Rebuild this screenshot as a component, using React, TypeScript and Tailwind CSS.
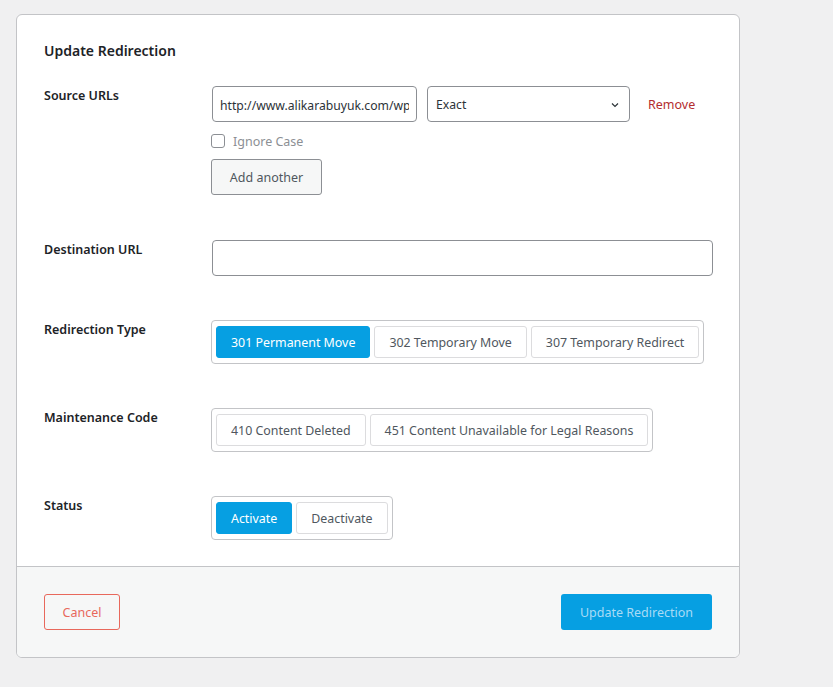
import React from "react";

const font = { fontFamily: '"Noto Sans", "Open Sans", sans-serif' };

function Seg({ items, active }: { items: string[]; active?: number }) {
  return (
    <div className="ml-[-1px] inline-flex shrink-0 gap-[4px] rounded-[4px] border border-[#c3c4c7] bg-white px-[4px] py-[5px]">
      {items.map((t, i) => (
        <button
          key={t}
          className={
            i === active
              ? "h-[32px] shrink-0 whitespace-nowrap rounded-[3px] border border-[#069fe2] bg-[#069fe2] px-[14px] pt-[2px] text-[12.4px] text-white"
              : "h-[32px] shrink-0 whitespace-nowrap rounded-[3px] border border-[#dcdcde] bg-white px-[14px] pt-[2px] text-[12.4px] text-[#50575e]"
          }
        >
          {t}
        </button>
      ))}
    </div>
  );
}

function Row({ label, children, className = "" }: { label: string; children: React.ReactNode; className?: string }) {
  return (
    <div className={"flex " + className}>
      <div className="w-[168px] shrink-0 pt-[1px] text-[12.5px] leading-[18px] font-semibold text-[#1d2327]">{label}</div>
      <div className="flex-1">{children}</div>
    </div>
  );
}

export default function App() {
  return (
    <div className="min-h-[687px] bg-[#f0f0f1] pt-[14px] pl-[16px]" style={font}>
      <div className="w-[724px] overflow-hidden rounded-[6px] border border-[#c3c4c7] bg-white">
        <div className="px-[27px] pt-[26px] pb-[26px]">
          <h2 className="mb-[25px] text-[14px] leading-[20px] font-semibold text-[#1d2327]">Update Redirection</h2>

          <Row label="Source URLs">
            <div className="flex h-[36px] items-center">
              <input
                readOnly
                value="http://www.alikarabuyuk.com/wp"
                className="h-[36px] w-[205px] rounded-[4px] border border-[#8c8f94] px-[7px] pt-[2px] text-[12.2px] text-[#2c3338] outline-none"
              />
              <div className="relative ml-[10px] h-[36px] w-[203px] rounded-[4px] border border-[#8c8f94] bg-white">
                <span className="absolute left-[8px] top-[9px] text-[12.2px] leading-[18px] text-[#2c3338]">Exact</span>
                <svg className="absolute right-[10px] top-[15px]" width="8" height="6" viewBox="0 0 8 6">
                  <path d="M1 1.5 L4 4.5 L7 1.5" fill="none" stroke="#2c3338" strokeWidth="1.2" />
                </svg>
              </div>
              <a className="relative top-[1px] ml-[18px] text-[12.5px] text-[#b32d2e]">Remove</a>
            </div>
            <label className="mt-[12px] ml-[-1px] flex h-[14px] items-center">
              <span className="block h-[14px] w-[14px] rounded-[3px] border border-[#8c8f94] bg-white" />
              <span className="relative top-[1px] ml-[8px] text-[12.5px] leading-[14px] text-[#8c8f94]">Ignore Case</span>
            </label>
            <button className="mt-[11px] ml-[-1px] h-[36px] w-[111px] rounded-[3px] border border-[#8c8f94] bg-[#f6f7f7] pt-[2px] text-[12.5px] text-[#50575e]">
              Add another
            </button>
          </Row>

          <Row label="Destination URL" className="mt-[45px]">
            <input className="h-[36px] w-[501px] rounded-[4px] border border-[#8c8f94] px-[7px] text-[12.5px] outline-none" />
          </Row>

          <Row label="Redirection Type" className="mt-[44px]">
            <Seg items={["301 Permanent Move", "302 Temporary Move", "307 Temporary Redirect"]} active={0} />
          </Row>

          <Row label="Maintenance Code" className="mt-[44px]">
            <Seg items={["410 Content Deleted", "451 Content Unavailable for Legal Reasons"]} />
          </Row>

          <Row label="Status" className="mt-[44px]">
            <Seg items={["Activate", "Deactivate"]} active={0} />
          </Row>
        </div>
        <div className="flex items-center justify-between border-t border-[#c3c4c7] bg-[#f6f7f7] px-[27px] pt-[27px] pb-[27px]">
          <button className="h-[36px] w-[76px] rounded-[3px] border border-[#e8685c] bg-transparent pt-[3px] text-[12.5px] text-[#e8685c]">
            Cancel
          </button>
          <button className="h-[36px] w-[151px] rounded-[3px] bg-[#069fe2] pt-[3px] text-[12.5px] text-[#a8dbf6]">
            Update Redirection
          </button>
        </div>
      </div>
    </div>
  );
}
